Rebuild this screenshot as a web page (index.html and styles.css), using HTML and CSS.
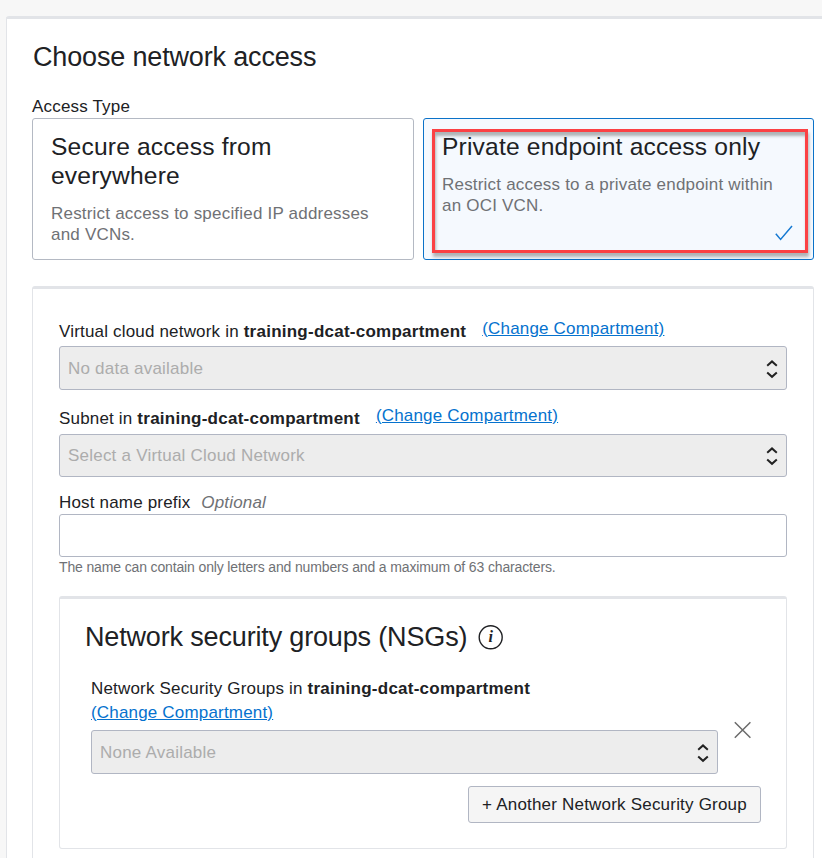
FILE: index.html
```html
<!DOCTYPE html>
<html lang="en">
<head>
<meta charset="utf-8">
<title>Choose network access</title>
<link rel="stylesheet" href="styles.css">
</head>
<body>
<main class="sheet">
  <h2 class="heading heading-main">Choose network access</h2>
  <div class="access-label">Access Type</div>
  <div class="cards">
    <div class="card">
      <h3 class="card-title">Secure access from everywhere</h3>
      <p class="card-text">Restrict access to specified IP addresses and VCNs.</p>
    </div>
    <div class="card card-selected">
      <h3 class="card-title">Private endpoint access only</h3>
      <p class="card-text">Restrict access to a private endpoint within an OCI VCN.</p>
      <svg class="check" width="18" height="16" viewBox="0 0 18 16"><path d="M.8 8.7 5.6 14.4 17 1"/></svg>
      <div class="highlight"></div>
    </div>
  </div>

  <section class="panel">
    <div class="label-row">
      <span>Virtual cloud network in <b>training-dcat-compartment</b></span>
      <a class="link" href="#">(Change Compartment)</a>
    </div>
    <div class="select">
      <span>No data available</span>
      <svg class="updown" width="12" height="20" viewBox="0 0 12 20"><path d="M1.2 6.7 6 2.4l4.8 4.3M1.2 13.5 6 17.8l4.8-4.3"/></svg>
    </div>

    <div class="label-row label-row-subnet">
      <span>Subnet in <b>training-dcat-compartment</b></span>
      <a class="link" href="#">(Change Compartment)</a>
    </div>
    <div class="select select-subnet">
      <span>Select a Virtual Cloud Network</span>
      <svg class="updown" width="12" height="20" viewBox="0 0 12 20"><path d="M1.2 6.7 6 2.4l4.8 4.3M1.2 13.5 6 17.8l4.8-4.3"/></svg>
    </div>

    <label class="host-label" for="host">Host name prefix <i>Optional</i></label>
    <input class="input" id="host" type="text">
    <div class="hint">The name can contain only letters and numbers and a maximum of 63 characters.</div>

    <section class="nsg">
      <div class="nsg-head">
        <h2 class="heading">Network security groups (NSGs)</h2>
        <svg class="info" width="26" height="26" viewBox="0 0 26 26"><circle cx="12.7" cy="13.3" r="11.5"/><text x="12.7" y="18">i</text></svg>
      </div>
      <div class="nsg-row">
        <div class="nsg-field">
          <div class="nsg-label">Network Security Groups in <b>training-dcat-compartment</b></div>
          <div class="nsg-link"><a class="link" href="#">(Change Compartment)</a></div>
          <div class="select">
            <span>None Available</span>
            <svg class="updown" width="12" height="20" viewBox="0 0 12 20"><path d="M1.2 6.7 6 2.4l4.8 4.3M1.2 13.5 6 17.8l4.8-4.3"/></svg>
          </div>
        </div>
        <svg class="remove" width="18" height="18" viewBox="0 0 18 18"><path d="m.8 1.2 15.6 15.6M16.4 1.2.8 16.8"/></svg>
      </div>
      <button class="add">+ Another Network Security Group</button>
    </section>
  </section>
</main>
</body>
</html>
```
FILE: styles.css
```css
* { box-sizing: border-box; }

body {
  margin: 0;
  height: 858px;
  padding: 16px 0 0 6px;
  overflow: hidden;
  background: #f7f7f7;
  color: #202124;
  font: 17px/24px "Liberation Sans", Arial, sans-serif;
  letter-spacing: 0.18px;
}

b { letter-spacing: 0.25px; }

.sheet {
  width: 840px;
  height: 842px;
  padding: 22px 0 0 25px;
  overflow: hidden;
  background: #fff;
  border: 1px solid #e2e4e8;
  border-top-width: 3px;
  border-bottom: 0;
  border-radius: 3px 0 0 0;
}

.heading {
  margin: 0;
  font-size: 27px;
  line-height: 31px;
  font-weight: 400;
  letter-spacing: -0.16px;
}

.heading-main {
  padding-left: 1px;
  line-height: 33px;
}

.access-label {
  height: 22px;
  margin-top: 22px;
  line-height: 22px;
}

.cards {
  display: grid;
  grid-template-columns: 382px 391px;
  gap: 9px;
}

.card {
  position: relative;
  height: 142px;
  padding: 13px 30px 13px 18px;
  border: 1px solid #b4b9c3;
  border-radius: 3px;
}

.card-selected {
  background: #f5f9fe;
  border-color: #0b72c8;
}

.card-title {
  margin: 0 0 13px;
  font-size: 24.6px;
  line-height: 29px;
  font-weight: 400;
}

.card:first-child .card-title { width: 300px; }

.card-text {
  margin: 0;
  line-height: 21px;
  letter-spacing: 0.2px;
  color: #6f7175;
}

.check {
  position: absolute;
  right: 20px;
  bottom: 18px;
  fill: none;
  stroke: #1579d2;
  stroke-width: 1.5;
}

/* Callout frame drawn over the selected card */
.highlight {
  position: absolute;
  inset: 10px 5px 6px 8px;
  border: 3px solid #fb4144;
  box-shadow: 1px 4px 3px rgba(90, 95, 98, .45), inset 1px 4px 3px rgba(90, 95, 98, .45);
}

.panel {
  width: 782px;
  height: 620px;
  margin-top: 26px;
  padding: 31px 26px 0;
  border: 1px solid #e2e4e8;
  border-top-width: 3px;
  border-radius: 3px;
}

.label-row {
  display: flex;
  align-items: flex-start;
  gap: 16px;
  height: 26px;
}

.label-row > .link { margin-top: -3px; }

.label-row-subnet {
  height: 27px;
  margin-top: 17px;
}

.link {
  color: #0572ce;
  text-decoration: underline;
}

.select {
  display: flex;
  align-items: center;
  justify-content: space-between;
  height: 44px;
  padding: 0 8px;
  background: #ededed;
  border: 1px solid #b1b6c3;
  border-radius: 3px;
  color: #acacac;
}

.select > span {
  padding-top: 2px;
  letter-spacing: 0.22px;
}

.select-subnet {
  height: 43px;
  padding-bottom: 1px;
}

.updown {
  position: relative;
  top: 1px;
  fill: none;
  stroke: #222;
  stroke-width: 2;
}

.host-label {
  display: block;
  margin-top: 15px;
  height: 22px;
  line-height: 22px;
}

.host-label i {
  margin-left: 6px;
  color: #6f7175;
}

.input {
  display: block;
  width: 100%;
  height: 43px;
  background: #fff;
  border: 1px solid #b1b6c3;
  border-radius: 3px;
}

.hint {
  height: 20px;
  line-height: 21px;
  font-size: 14px;
  letter-spacing: -0.14px;
  color: #6f7175;
}

.nsg {
  height: 253px;
  margin-top: 19px;
  padding: 22px 25px 0;
  border: 1px solid #e2e4e8;
  border-top-width: 3px;
  border-radius: 3px;
}

.nsg-head {
  display: flex;
  align-items: center;
  gap: 11px;
  height: 32px;
}

.info circle {
  fill: none;
  stroke: #202124;
  stroke-width: 1.4;
}

.info text {
  fill: #202124;
  font: italic bold 16px "Liberation Serif", serif;
  letter-spacing: 0;
  text-anchor: middle;
}

.nsg-row {
  display: flex;
  margin: 24px 0 0 6px;
}

.nsg-field { width: 627px; }

.nsg-link { padding-top: 2px; height: 31px; }

.nsg-label { height: 22px; }

.remove {
  margin: 44px 0 0 16px;
  fill: none;
  stroke: #6b6b6b;
  stroke-width: 1.5;
}

.add {
  display: block;
  width: 293px;
  height: 37px;
  margin: 12px 0 0 auto;
  padding: 0;
  background: #f5f5f5;
  border: 1px solid #b1b6c3;
  border-radius: 3px;
  color: #202124;
  font: inherit;
  letter-spacing: 0.2px;
}
```
